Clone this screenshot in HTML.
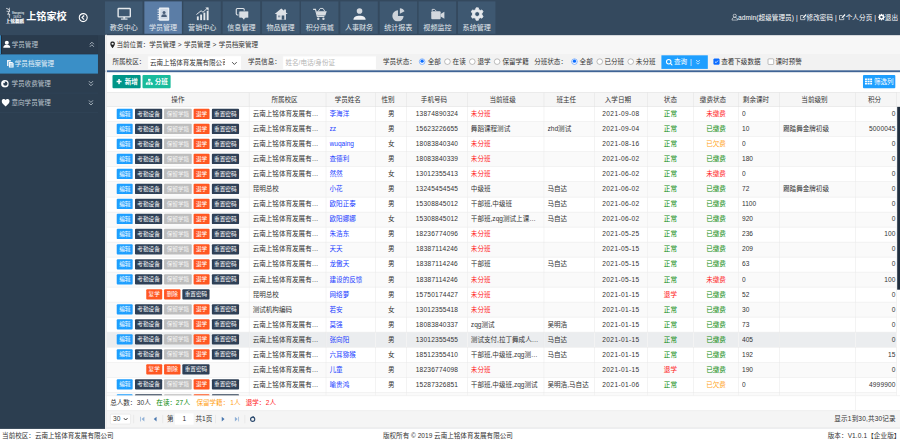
<!DOCTYPE html>
<html lang="zh-CN">
<head>
<meta charset="utf-8">
<title>上铭家校</title>
<style>
html,body{margin:0;padding:0;background:#fff;}
body{width:900px;height:442px;overflow:hidden;position:relative;}
#root{position:absolute;left:0;top:0;width:1920px;height:943px;transform:scale(0.46875);transform-origin:0 0;font-family:"Liberation Sans","Noto Sans CJK SC",sans-serif;font-size:14px;color:#333;overflow:hidden;background:#2c3e50;}
#root *{box-sizing:border-box;}
/* header */
#hd{position:absolute;left:0;top:0;width:1920px;height:75px;background:#34495e;z-index:3;}
#logo{position:absolute;left:11px;top:16px;width:42px;height:34px;}
#brand{position:absolute;left:56px;top:19px;font-size:21.500px;font-weight:bold;color:#fff;line-height:34px;letter-spacing:0px;white-space:nowrap;}
#coll{position:absolute;left:167px;top:27px;width:21px;height:21px;}
#tabs{position:absolute;left:224px;top:3px;height:69px;white-space:nowrap;}
.tab{position:absolute;top:0;width:80px;height:69px;background:#3e5871;text-align:center;color:#fff;}
.tab.on{background:#5b7da6;}
.tab .ic{position:absolute;left:25px;top:11px;width:30px;height:30px;}
.tab .tl{position:absolute;left:-10px;right:-10px;top:46px;font-size:15px;line-height:20px;color:#e3e8ed;}
#user{position:absolute;right:4px;top:26px;color:#fff;font-size:14px;letter-spacing:0.150px;line-height:22px;white-space:nowrap;}
#user svg{vertical-align:-2px;}
/* sidebar */
#sb{position:absolute;left:0;top:74px;width:224px;height:841px;background:#2c3e50;}
.mi{position:absolute;left:0;width:209px;height:41px;color:#bcc5ce;font-size:14px;line-height:40px;border-bottom:1px solid #34485c;}
.mi .tx{position:absolute;left:41px;top:0;}
.mi .ico{position:absolute;left:9px;top:11px;width:18px;height:18px;}
.mi .ar{position:absolute;left:188px;top:13px;width:12px;height:14px;}
.mi.p1{border-bottom-color:#1f2c3a;border-left:2px solid #3a8fc7;box-shadow:inset 2px 0 0 #1d2a38;background:#2a3b4d;}
.mi.act{background:#3a8fc7;border-bottom:none;height:40px;}
/* main */
#main{position:absolute;left:224px;top:74px;width:1696px;height:841px;background:#fff;border-left:1px solid #e4e4e4;}
#lstrip{position:absolute;left:0;top:0;width:2.500px;height:841px;background:#ececec;z-index:5;}
#bc{position:absolute;left:0;top:0;width:1696px;height:40px;background:#f7f7f7;border-top:1px solid #e6e6e6;font-size:14px;line-height:41px;color:#333;}
#bc .t{position:absolute;left:23.500px;top:0;white-space:nowrap;word-spacing:1px;}
#flt{position:absolute;left:0;top:40px;width:1696px;height:40px;background:#f2f2f2;border-bottom:4px solid #3f6496;font-size:14px;color:#333;}
#flt .lb{position:absolute;top:0;line-height:37px;white-space:nowrap;}
.inp{position:absolute;top:4.500px;height:30px;background:#fff;border:1px solid #ececec;line-height:29px;padding-left:5px;white-space:nowrap;overflow:hidden;}
.rd{position:absolute;top:10.500px;width:13px;height:13px;border-radius:50%;border:1px solid #767676;background:#fff;}
.rd.on{border:1.500px solid #0a6cff;}
.rd.on:after{content:"";position:absolute;left:1.500px;top:1.500px;width:7px;height:7px;border-radius:50%;background:#0a6cff;}
.cb{position:absolute;top:11px;width:13px;height:13px;border-radius:2px;border:1px solid #767676;background:#fff;}
.cb.on{background:#0a6cff;border-color:#0a6cff;}
#qbtn{position:absolute;left:1186px;top:4px;width:98.500px;height:28.500px;background:#1e9fff;color:#fff;line-height:28px;font-size:14px;white-space:nowrap;}
/* toolbar */
.tb{position:absolute;top:86px;height:28px;color:#fff;font-size:14px;line-height:28px;white-space:nowrap;border-radius:2px;}
/* table */
#tbw{position:absolute;left:2px;top:122.500px;width:1694px;height:647.500px;overflow:hidden;}
table{border-collapse:collapse;table-layout:fixed;width:1684px;font-size:14px;color:#333;}
th{height:30.500px;background:#f6f6f6;font-weight:normal;text-align:center;border:1px solid #e0e0e0;padding:0 13px 0 0;color:#333;}
th:first-child,th:nth-child(9){padding:0;}th:last-child{padding-right:6px;}
td{height:32.100px;border:1px solid #e6e6e6;padding:0 7px 2px 7px;white-space:nowrap;overflow:hidden;line-height:20px;}
td.c{text-align:center;padding:0 0 2px 0;}
td.rt{text-align:right;padding:0 1px 2px 0;letter-spacing:.3px;}
td.n{letter-spacing:.45px;}td.d{letter-spacing:.8px;}
tr.ev td{background:#fafafa;}
tr.hv td{background:#ebedef;}
.e{overflow:hidden;text-overflow:ellipsis;white-space:nowrap;}
.b{display:inline-block;height:22px;line-height:22px;padding:0 5px;font-size:12px;color:#fff;border-radius:2px;margin:0 2.300px;vertical-align:middle;position:relative;top:0;}
.bn{background:#1e9fff;}.bc{background:#2f4056;}.bd{background:#bdbdbd;color:#f4f4f4;}.br{background:#ff5722;}
.lk{color:#2340ff;}
.n2{letter-spacing:.4px;}
.g{color:#0a8a0a;}.r{color:#ff1a1a;}.o{color:#ffa31a;}
#thbg{position:absolute;left:2px;top:122.500px;width:1694px;height:31.500px;background:#f6f6f6;border-top:1px solid #e0e0e0;border-bottom:1px solid #e0e0e0;}
#sbar{position:absolute;left:1689px;top:154px;width:6px;height:390px;background:#1f2d3d;}
/* summary + pager */
#sum{position:absolute;left:0;top:770px;width:1696px;height:32px;background:#fff;border-top:1px solid #e6e6e6;font-size:14px;line-height:28px;white-space:nowrap;}
#pg{position:absolute;left:0;top:802px;width:1696px;height:36px;background:#f5f5f5;border-top:1px solid #e2e2e2;border-bottom:1px solid #e2e2e2;font-size:14px;line-height:34px;white-space:nowrap;}
#pg .a{position:absolute;top:0;}
/* footer */
#ft{position:absolute;left:0;top:915px;width:1920px;height:28px;background:#fff;font-size:14px;line-height:30px;color:#333;white-space:nowrap;}
</style>
</head>
<body>
<div id="root">
 <div id="hd">
  <svg id="logo" viewBox="0 0 42 34"><path d="M3 2c2 1 4 1 5 3M9 1c-1 3 1 4 0 7s-3 3-1 6 0 4 1 7M4 8c2 0 3 1 5 0M5 14c2-1 3 0 5 1" fill="none" stroke="#fff" stroke-width="1.700" stroke-linecap="round"/><text x="14.500" y="13" font-size="9" font-weight="bold" fill="#dfe4e9" textLength="26" lengthAdjust="spacingAndGlyphs" font-family="Liberation Sans,sans-serif">Shangming</text><text x="18" y="21.500" font-size="8" font-weight="bold" fill="#c3ccd5" textLength="16" lengthAdjust="spacingAndGlyphs" font-family="Liberation Sans,sans-serif">DANCE</text><text x="1.500" y="32" font-size="9.600" font-weight="bold" fill="#fff" stroke="#fff" stroke-width=".35" textLength="38.500" font-family="Liberation Sans,Noto Sans CJK SC,sans-serif">上铭舞蹈</text></svg>
  <div id="brand">上铭家校</div>
  <svg id="coll" viewBox="0 0 21 21"><circle cx="10.500" cy="10.500" r="8.500" fill="none" stroke="#fff" stroke-width="2.400"/><path d="M12.500 6L8 10.500l4.500 4.500" fill="none" stroke="#fff" stroke-width="2.600"/></svg>
  <div id="tabs"><div class="tab" style="left:0.0px"><div class="ic"><svg viewBox="0 0 32 32" width="32" height="32"><rect x="3" y="4" width="26" height="18" rx="1.5" fill="none" stroke="#e4e8ec" stroke-width="3"/><rect x="14" y="22" width="4" height="4" fill="#e4e8ec"/><rect x="9" y="25.5" width="14" height="2.5" fill="#e4e8ec"/></svg></div><div class="tl">教务中心</div></div><div class="tab on" style="left:83.7px"><div class="ic"><svg viewBox="0 0 32 32" width="32" height="32"><rect x="6" y="2" width="22" height="28" rx="2" fill="#e8edf3"/><rect x="9" y="5" width="16" height="22" fill="#cfd9e6"/><circle cx="17" cy="12.5" r="3.2" fill="#4a5f7a"/><path d="M11 22c0-4 2.5-5.5 6-5.5s6 1.500 6 5.500z" fill="#4a5f7a"/><g fill="#e8edf3"><rect x="3" y="6" width="5" height="2"/><rect x="3" y="11" width="5" height="2"/><rect x="3" y="16" width="5" height="2"/><rect x="3" y="21" width="5" height="2"/><rect x="3" y="26" width="5" height="2"/></g></svg></div><div class="tl">学员管理</div></div><div class="tab" style="left:167.3px"><div class="ic"><svg viewBox="0 0 32 32" width="32" height="32"><g fill="#e4e8ec"><rect x="4" y="21" width="4" height="8"/><rect x="11" y="17" width="4" height="12"/><rect x="18" y="13" width="4" height="16"/><rect x="25" y="9" width="4" height="20"/></g><path d="M3 17 L13 9 L17 12 L27 3" fill="none" stroke="#e4e8ec" stroke-width="2"/><path d="M22 2h7v7z" fill="#e4e8ec"/></svg></div><div class="tl">营销中心</div></div><div class="tab" style="left:251.0px"><div class="ic"><svg viewBox="0 0 32 32" width="32" height="32"><rect x="4" y="4" width="17" height="14" rx="2.500" fill="none" stroke="#dfe3e8" stroke-width="2.400"/><path d="M12 9.500h16a2.500 2.500 0 0 1 2.500 2.500v10a2.500 2.500 0 0 1-2.500 2.500h-4.500l-3.500 4.500-3.500-4.500h-4.500a2.500 2.500 0 0 1-2.500-2.500v-10a2.500 2.500 0 0 1 2.500-2.500z" fill="#d9dee4" stroke="#3e5871" stroke-width="1.600"/></svg></div><div class="tl">信息管理</div></div><div class="tab" style="left:334.6px"><div class="ic"><svg viewBox="0 0 32 32" width="32" height="32"><path d="M16 4L2 16h4v12h20V16h4L26 12.500V6h-4v3z" fill="#dde1e6"/><rect x="17" y="19" width="5.500" height="9" fill="#3e5871"/><rect x="9" y="19" width="5" height="4" fill="#3e5871" opacity=".55"/></svg></div><div class="tl">物品管理</div></div><div class="tab" style="left:418.2px"><div class="ic"><svg viewBox="0 0 32 32" width="32" height="32"><path d="M1 6h5l4 15h15" fill="none" stroke="#d8dde2" stroke-width="2.500"/><path d="M8 10h22l-3 9H10z" fill="#d8dde2"/><path d="M12 10l4-6h6l4 6" fill="none" stroke="#d8dde2" stroke-width="2"/><circle cx="12" cy="26" r="2.500" fill="#d8dde2"/><circle cx="23" cy="26" r="2.500" fill="#d8dde2"/></svg></div><div class="tl">积分商城</div></div><div class="tab" style="left:501.9px"><div class="ic"><svg viewBox="0 0 32 32" width="32" height="32"><circle cx="16" cy="9.500" r="6" fill="#d5dae0"/><path d="M3 28c0-6 5-8.500 13-8.500s13 2.500 13 8.500z" fill="#eef0f3"/></svg></div><div class="tl">人事财务</div></div><div class="tab" style="left:585.6px"><div class="ic"><svg viewBox="0 0 32 32" width="32" height="32"><path d="M14 8v12h12a12 12 0 1 1-12-12z" fill="#cdd3da"/><path d="M17.500 4a11.500 11.500 0 0 1 10 6.500l-10 5.500z" fill="#cdd3da" transform="translate(.5,-.5)"/></svg></div><div class="tl">统计报表</div></div><div class="tab" style="left:669.2px"><div class="ic"><svg viewBox="0 0 32 32" width="32" height="32"><rect x="2" y="10" width="20" height="17" rx="2" fill="#d3d8de"/><path d="M22 16l8-5v15l-8-5z" fill="#d3d8de"/><path d="M4 10V6h5l4 4" fill="none" stroke="#d3d8de" stroke-width="2"/></svg></div><div class="tl">视频监控</div></div><div class="tab" style="left:752.9px"><div class="ic"><svg viewBox="0 0 32 32" width="32" height="32"><path fill="#e6e9ed" fill-rule="evenodd" stroke="#e6e9ed" stroke-width="1.600" stroke-linejoin="round" d="M12.75 6.33 L13.47 2.74 L18.53 2.74 L19.25 6.33 L22.75 8.35 L26.22 7.18 L28.75 11.56 L26.00 13.98 L26.00 18.02 L28.75 20.44 L26.22 24.82 L22.75 23.65 L19.25 25.67 L18.53 29.26 L13.47 29.26 L12.75 25.67 L9.25 23.65 L5.78 24.82 L3.25 20.44 L6.00 18.02 L6.00 13.98 L3.25 11.56 L5.78 7.18 L9.25 8.35Z M16 10.800a5.200 5.200 0 1 0 0 10.400 5.200 5.200 0 0 0 0-10.400z"/></svg></div><div class="tl">系统管理</div></div></div>
  <div id="user"><svg width="15" height="15" viewBox="0 0 15 15"><circle cx="7.500" cy="4.500" r="3.300" fill="none" stroke="#fff" stroke-width="1.300"/><path d="M1.500 14c0-4 2.500-6 6-6s6 2 6 6z" fill="none" stroke="#fff" stroke-width="1.300"/></svg>admin(超级管理员) | <svg width="15" height="15" viewBox="0 0 15 15"><path d="M11 8.500V13H2V4h6" fill="none" stroke="#fff" stroke-width="1.400"/><path d="M6 10l1-3 6-6 2 2-6 6z" fill="#fff"/></svg>修改密码 | <svg width="15" height="15" viewBox="0 0 15 15"><path d="M11 8.500V13H2V4h6" fill="none" stroke="#fff" stroke-width="1.400"/><path d="M6 10l1-3 6-6 2 2-6 6z" fill="#fff"/></svg>个人分页 | <svg width="15" height="15" viewBox="0 0 32 32"><path fill="#fff" fill-rule="evenodd" d="M13.500 2h5l.8 4.200 2.400 1 3.500-2.400 3.500 3.500-2.400 3.500 1 2.400 4.200.8v5l-4.200.8-1 2.400 2.400 3.500-3.500 3.500-3.500-2.400-2.400 1-.8 4.200h-5l-.8-4.200-2.400-1-3.500 2.400-3.500-3.500 2.400-3.500-1-2.400L.500 20v-5l4.200-.8 1-2.400-2.400-3.500 3.500-3.500 3.500 2.400 2.400-1zM16 12a5.500 5.500 0 1 0 0 11 5.500 5.500 0 0 0 0-11z" transform="translate(0,-1.500)"/></svg>退出</div>
 </div>

 <div id="sb">
  <div class="mi p1" style="top:1px"><svg class="ico" viewBox="0 0 18 18" style="left:3.500px;width:17px;height:17px"><circle cx="9" cy="5.500" r="4.500" fill="#fff"/><path d="M1 17c0-5 3-7 8-7s8 2 8 7z" fill="#fff"/></svg><span class="tx" style="left:23px">学员管理</span><svg class="ar" viewBox="0 0 12 14"><path d="M1.500 6.500L6 2l4.500 4.500M1.500 12L6 7.500l4.500 4.500" fill="none" stroke="#b8c2cc" stroke-width="1.800"/></svg></div>
  <div class="mi act" style="top:42px;height:41px"><svg class="ico" viewBox="0 0 18 18" style="left:13px;top:11px"><path d="M2 1h8v3H5v10H2z" fill="#fff" opacity=".9"/><path d="M6 5h7l3 3v9H6z" fill="#fff"/><path d="M8 9h6M8 12h6M8 14.500h6" stroke="#3a8fc7" stroke-width="1"/></svg><span class="tx" style="left:31.500px;color:#e8f1f8">学员档案管理</span></div>
  <div class="mi" style="top:84px"><svg class="ico" viewBox="0 0 18 18" style="left:2px;width:17px;height:17px;top:12px"><circle cx="9" cy="9" r="8.500" fill="#fff"/><circle cx="10" cy="9" r="4.800" fill="#2c3e50"/><circle cx="7" cy="6" r="2" fill="#fff"/></svg><span class="tx" style="left:24.500px">学员收费管理</span><svg class="ar" viewBox="0 0 12 14"><path d="M1.500 2L6 6.500 10.500 2M1.500 7.500L6 12l4.500-4.500" fill="none" stroke="#b8c2cc" stroke-width="1.800"/></svg></div>
  <div class="mi" style="top:125px"><svg class="ico" viewBox="0 0 18 18" style="left:3px"><path d="M9 17C3 12 .500 9 .500 5.500A4.500 4.500 0 0 1 9 3.500 4.500 4.500 0 0 1 17.500 5.500C17.500 9 15 12 9 17z" fill="#fff"/></svg><span class="tx" style="left:24.500px">意向学员管理</span><svg class="ar" viewBox="0 0 12 14"><path d="M1.500 2L6 6.500 10.500 2M1.500 7.500L6 12l4.500-4.500" fill="none" stroke="#b8c2cc" stroke-width="1.800"/></svg></div>
 </div>

 <div id="main">
  <div id="lstrip"></div>
  <div id="bc"><svg style="position:absolute;left:9.500px;top:13px" width="10.500" height="15" viewBox="0 0 12 17"><path fill-rule="evenodd" d="M6 0a6 6 0 0 1 6 6c0 4-6 11-6 11S0 10 0 6a6 6 0 0 1 6-6zm0 3.300a2.700 2.700 0 1 0 0 5.400 2.700 2.700 0 0 0 0-5.400z" fill="#222"/></svg><span class="t">当前位置：学员管理 &gt; 学员管理 &gt; 学员档案管理</span></div>
  <div id="flt">
   <span class="lb" style="left:15px">所属校区：</span>
   <div class="inp" style="left:90px;width:200px;padding-left:4px">云南上铭体育发展有限公司<span style="position:absolute;right:0;top:0;width:34px;height:28px;background:#fff"></span><svg style="position:absolute;right:8px;top:11px" width="12" height="8" viewBox="0 0 12 8"><path d="M1 1.500l5 5 5-5" fill="none" stroke="#444" stroke-width="2"/></svg></div>
   <span class="lb" style="left:304px">学员信息：</span>
   <div class="inp" style="left:378px;width:200px;color:#b5b5b5">姓名/电话/身份证</div>
   <span class="lb" style="left:592px">学员状态：</span>
   <span class="rd on" style="left:669px"></span><span class="lb" style="left:687.500px">全部</span>
   <span class="rd" style="left:723px"></span><span class="lb" style="left:740.500px">在读</span>
   <span class="rd" style="left:776px"></span><span class="lb" style="left:793.500px">退学</span>
   <span class="rd" style="left:829px"></span><span class="lb" style="left:847px">保留学籍</span>
   <span class="lb" style="left:914.500px">分班状态：</span>
   <span class="rd on" style="left:994px"></span><span class="lb" style="left:1011.500px">全部</span>
   <span class="rd" style="left:1047.5px"></span><span class="lb" style="left:1064.500px">已分班</span>
   <span class="rd" style="left:1114px"></span><span class="lb" style="left:1131.500px">未分班</span>
   <div id="qbtn"><svg style="position:absolute;left:9px;top:6.500px" width="15.500" height="15.500" viewBox="0 0 14 14"><circle cx="6" cy="6" r="4.300" fill="none" stroke="#fff" stroke-width="2"/><path d="M9.300 9.300L13 13" stroke="#fff" stroke-width="2.200"/></svg><span style="position:absolute;left:27px">查询</span><span style="position:absolute;left:61px;top:-1px">|</span><svg style="position:absolute;left:73px;top:9px" width="10" height="11" viewBox="0 0 10 11"><path d="M1 1l4 4 4-4M1 6l4 4 4-4" fill="none" stroke="#fff" stroke-width="1.500"/></svg></div>
   <span class="cb on" style="left:1297px"><svg width="11" height="11" viewBox="0 0 12 12" style="position:absolute;left:0;top:0"><path d="M2.500 6l2.500 2.500 4.500-5" fill="none" stroke="#fff" stroke-width="1.800"/></svg></span><span class="lb" style="left:1313.500px">查看下级数据</span>
   <span class="cb" style="left:1412.500px"></span><span class="lb" style="left:1429.500px">课时预警</span>
  </div>
  <div class="tb" style="left:15px;width:60px;background:#009688"><svg style="position:absolute;left:8px;top:8px" width="12" height="12" viewBox="0 0 12 12"><path d="M6 .500v11M.500 6h11" stroke="#fff" stroke-width="3.200"/></svg><span style="position:absolute;left:26px;font-weight:bold">新增</span></div>
  <div class="tb" style="left:79px;width:60px;background:#1abc9c"><svg style="position:absolute;left:6px;top:7px" width="17" height="15" viewBox="0 0 15 14"><rect x="5" y="1" width="5" height="4" fill="#fff"/><path d="M7.500 5v3M2.500 10V8h10v2" fill="none" stroke="#fff" stroke-width="1.400"/><rect x="0.500" y="9.500" width="4" height="3.500" fill="#fff"/><rect x="5.500" y="9.500" width="4" height="3.500" fill="#fff"/><rect x="10.500" y="9.500" width="4" height="3.500" fill="#fff"/></svg><span style="position:absolute;left:26px;font-weight:bold">分班</span></div>
  <div class="tb" style="left:1615.500px;width:69px;background:#1e9fff"><svg style="position:absolute;left:4px;top:7px" width="16" height="14" viewBox="0 0 16 14"><g fill="#fff"><rect x="0" y="0" width="4.500" height="3.600"/><rect x="5.700" y="0" width="4.500" height="3.600"/><rect x="11.400" y="0" width="4.500" height="3.600"/><rect x="0" y="5" width="4.500" height="3.600"/><rect x="5.700" y="5" width="4.500" height="3.600"/><rect x="11.400" y="5" width="4.500" height="3.600"/><rect x="0" y="10" width="4.500" height="3.600"/><rect x="5.700" y="10" width="4.500" height="3.600"/><rect x="11.400" y="10" width="4.500" height="3.600"/></g></svg><span style="position:absolute;left:24px">筛选列</span></div>

  <div id="thbg"></div>
  <div id="tbw">
   <table><colgroup><col style="width:304px"><col style="width:164px"><col style="width:106px"><col style="width:66px"><col style="width:129.5px"><col style="width:163.5px"><col style="width:108px"><col style="width:112.5px"><col style="width:98.5px"><col style="width:96px"><col style="width:87.5px"><col style="width:162px"><col style="width:87px"></colgroup>
   <thead><tr><th>操作</th><th>所属校区</th><th>学员姓名</th><th>性别</th><th>手机号码</th><th>当前班级</th><th>班主任</th><th>入学日期</th><th>状态</th><th>缴费状态</th><th>剩余课时</th><th>当前级别</th><th>积分</th></tr></thead>
   <tbody>
<tr class=""><td class="c"><a class="b bn">编辑</a><a class="b bc">考勤设备</a><a class="b bd">保留学籍</a><a class="b br">退学</a><a class="b bc">重置密码</a></td><td><div class="e">云南上铭体育发展有限公司</div></td><td><div class="e"><a class="lk">李海洋</a></div></td><td class="c">男</td><td class="c n">13874890324</td><td><div class="e"><span class="r">未分班</span></div></td><td><div class="e"></div></td><td class="c d">2021-09-08</td><td class="c"><span class="g">正常</span></td><td class="c"><span class="r">未缴费</span></td><td><div class="e">0</div></td><td><div class="e"></div></td><td class="rt">0</td></tr>
<tr class="ev"><td class="c"><a class="b bn">编辑</a><a class="b bc">考勤设备</a><a class="b bd">保留学籍</a><a class="b br">退学</a><a class="b bc">重置密码</a></td><td><div class="e">云南上铭体育发展有限公司</div></td><td><div class="e"><a class="lk">zz</a></div></td><td class="c">男</td><td class="c n">15623226655</td><td><div class="e">舞蹈课程测试</div></td><td><div class="e">zhd测试</div></td><td class="c d">2021-09-04</td><td class="c"><span class="g">正常</span></td><td class="c"><span class="g">已缴费</span></td><td><div class="e">10</div></td><td><div class="e">踢踏舞金牌初级</div></td><td class="rt">5000045</td></tr>
<tr class=""><td class="c"><a class="b bn">编辑</a><a class="b bc">考勤设备</a><a class="b bd">保留学籍</a><a class="b br">退学</a><a class="b bc">重置密码</a></td><td><div class="e">云南上铭体育发展有限公司</div></td><td><div class="e"><a class="lk">wuqaing</a></div></td><td class="c">女</td><td class="c n">18083840340</td><td><div class="e"><span class="r">未分班</span></div></td><td><div class="e"></div></td><td class="c d">2021-08-16</td><td class="c"><span class="g">正常</span></td><td class="c"><span class="o">已欠费</span></td><td><div class="e">0</div></td><td><div class="e"></div></td><td class="rt">0</td></tr>
<tr class="ev"><td class="c"><a class="b bn">编辑</a><a class="b bc">考勤设备</a><a class="b bd">保留学籍</a><a class="b br">退学</a><a class="b bc">重置密码</a></td><td><div class="e">云南上铭体育发展有限公司</div></td><td><div class="e"><a class="lk">查德利</a></div></td><td class="c">男</td><td class="c n">18083840339</td><td><div class="e"><span class="r">未分班</span></div></td><td><div class="e"></div></td><td class="c d">2021-06-02</td><td class="c"><span class="g">正常</span></td><td class="c"><span class="g">已缴费</span></td><td><div class="e">180</div></td><td><div class="e"></div></td><td class="rt">0</td></tr>
<tr class=""><td class="c"><a class="b bn">编辑</a><a class="b bc">考勤设备</a><a class="b bd">保留学籍</a><a class="b br">退学</a><a class="b bc">重置密码</a></td><td><div class="e">云南上铭体育发展有限公司</div></td><td><div class="e"><a class="lk">然然</a></div></td><td class="c">女</td><td class="c n">13012355413</td><td><div class="e"><span class="r">未分班</span></div></td><td><div class="e"></div></td><td class="c d">2021-06-02</td><td class="c"><span class="g">正常</span></td><td class="c"><span class="r">未缴费</span></td><td><div class="e">0</div></td><td><div class="e"></div></td><td class="rt">0</td></tr>
<tr class="ev"><td class="c"><a class="b bn">编辑</a><a class="b bc">考勤设备</a><a class="b bd">保留学籍</a><a class="b br">退学</a><a class="b bc">重置密码</a></td><td><div class="e">昆明总校</div></td><td><div class="e"><a class="lk">小花</a></div></td><td class="c">男</td><td class="c n">13245454545</td><td><div class="e">中级班</div></td><td><div class="e">马自达</div></td><td class="c d">2021-06-02</td><td class="c"><span class="g">正常</span></td><td class="c"><span class="g">已缴费</span></td><td><div class="e">72</div></td><td><div class="e">踢踏舞金牌初级</div></td><td class="rt">0</td></tr>
<tr class=""><td class="c"><a class="b bn">编辑</a><a class="b bc">考勤设备</a><a class="b bd">保留学籍</a><a class="b br">退学</a><a class="b bc">重置密码</a></td><td><div class="e">云南上铭体育发展有限公司</div></td><td><div class="e"><a class="lk">欧阳正泰</a></div></td><td class="c">男</td><td class="c n">15308845012</td><td><div class="e">干部班,中级班</div></td><td><div class="e">马自达</div></td><td class="c d">2021-06-02</td><td class="c"><span class="g">正常</span></td><td class="c"><span class="g">已缴费</span></td><td><div class="e">1100</div></td><td><div class="e"></div></td><td class="rt">0</td></tr>
<tr class="ev"><td class="c"><a class="b bn">编辑</a><a class="b bc">考勤设备</a><a class="b bd">保留学籍</a><a class="b br">退学</a><a class="b bc">重置密码</a></td><td><div class="e">云南上铭体育发展有限公司</div></td><td><div class="e"><a class="lk">欧阳娜娜</a></div></td><td class="c">女</td><td class="c n">15308845012</td><td><div class="e">干部班,zqg测试上课班级</div></td><td><div class="e">马自达</div></td><td class="c d">2021-06-02</td><td class="c"><span class="g">正常</span></td><td class="c"><span class="g">已缴费</span></td><td><div class="e">920</div></td><td><div class="e"></div></td><td class="rt">0</td></tr>
<tr class=""><td class="c"><a class="b bn">编辑</a><a class="b bc">考勤设备</a><a class="b bd">保留学籍</a><a class="b br">退学</a><a class="b bc">重置密码</a></td><td><div class="e">云南上铭体育发展有限公司</div></td><td><div class="e"><a class="lk">朱浩东</a></div></td><td class="c">男</td><td class="c n">18236774096</td><td><div class="e"><span class="r">未分班</span></div></td><td><div class="e"></div></td><td class="c d">2021-05-25</td><td class="c"><span class="g">正常</span></td><td class="c"><span class="g">已缴费</span></td><td><div class="e">236</div></td><td><div class="e"></div></td><td class="rt">100</td></tr>
<tr class="ev"><td class="c"><a class="b bn">编辑</a><a class="b bc">考勤设备</a><a class="b bd">保留学籍</a><a class="b br">退学</a><a class="b bc">重置密码</a></td><td><div class="e">云南上铭体育发展有限公司</div></td><td><div class="e"><a class="lk">天天</a></div></td><td class="c">男</td><td class="c n">18387114246</td><td><div class="e"><span class="r">未分班</span></div></td><td><div class="e"></div></td><td class="c d">2021-05-15</td><td class="c"><span class="g">正常</span></td><td class="c"><span class="g">已缴费</span></td><td><div class="e">209</div></td><td><div class="e"></div></td><td class="rt">0</td></tr>
<tr class=""><td class="c"><a class="b bn">编辑</a><a class="b bc">考勤设备</a><a class="b bd">保留学籍</a><a class="b br">退学</a><a class="b bc">重置密码</a></td><td><div class="e">云南上铭体育发展有限公司</div></td><td><div class="e"><a class="lk">龙傲天</a></div></td><td class="c">男</td><td class="c n">18387114246</td><td><div class="e">干部班</div></td><td><div class="e">马自达</div></td><td class="c d">2021-05-15</td><td class="c"><span class="g">正常</span></td><td class="c"><span class="g">已缴费</span></td><td><div class="e">63</div></td><td><div class="e"></div></td><td class="rt">0</td></tr>
<tr class="ev"><td class="c"><a class="b bn">编辑</a><a class="b bc">考勤设备</a><a class="b bd">保留学籍</a><a class="b br">退学</a><a class="b bc">重置密码</a></td><td><div class="e">云南上铭体育发展有限公司</div></td><td><div class="e"><a class="lk">建设的反馈</a></div></td><td class="c">男</td><td class="c n">18387114246</td><td><div class="e"><span class="r">未分班</span></div></td><td><div class="e"></div></td><td class="c d">2021-05-15</td><td class="c"><span class="g">正常</span></td><td class="c"><span class="r">未缴费</span></td><td><div class="e">0</div></td><td><div class="e"></div></td><td class="rt">100</td></tr>
<tr class=""><td class="c"><a class="b br">复学</a><a class="b br">删除</a><a class="b bc">重置密码</a></td><td><div class="e">昆明总校</div></td><td><div class="e"><a class="lk">网络萝</a></div></td><td class="c">男</td><td class="c n">15750174427</td><td><div class="e"><span class="r">未分班</span></div></td><td><div class="e"></div></td><td class="c d">2021-01-15</td><td class="c"><span class="r">退学</span></td><td class="c"><span class="g">已缴费</span></td><td><div class="e">52</div></td><td><div class="e"></div></td><td class="rt">0</td></tr>
<tr class="ev"><td class="c"><a class="b bn">编辑</a><a class="b bc">考勤设备</a><a class="b bd">保留学籍</a><a class="b br">退学</a><a class="b bc">重置密码</a></td><td><div class="e">测试机构编码</div></td><td><div class="e"><a class="lk">若安</a></div></td><td class="c">女</td><td class="c n">13012355418</td><td><div class="e"><span class="r">未分班</span></div></td><td><div class="e"></div></td><td class="c d">2021-01-15</td><td class="c"><span class="g">正常</span></td><td class="c"><span class="g">已缴费</span></td><td><div class="e">30</div></td><td><div class="e"></div></td><td class="rt">0</td></tr>
<tr class=""><td class="c"><a class="b bn">编辑</a><a class="b bc">考勤设备</a><a class="b bd">保留学籍</a><a class="b br">退学</a><a class="b bc">重置密码</a></td><td><div class="e">云南上铭体育发展有限公司</div></td><td><div class="e"><a class="lk">莫强</a></div></td><td class="c">男</td><td class="c n">18083840337</td><td><div class="e">zqg测试</div></td><td><div class="e">吴明浩</div></td><td class="c d">2021-01-15</td><td class="c"><span class="g">正常</span></td><td class="c"><span class="g">已缴费</span></td><td><div class="e">73</div></td><td><div class="e"></div></td><td class="rt">0</td></tr>
<tr class="ev hv"><td class="c"><a class="b bn">编辑</a><a class="b bc">考勤设备</a><a class="b bd">保留学籍</a><a class="b br">退学</a><a class="b bc">重置密码</a></td><td><div class="e">云南上铭体育发展有限公司</div></td><td><div class="e"><a class="lk">张向阳</a></div></td><td class="c">男</td><td class="c n">13012355455</td><td><div class="e">测试支付,拉丁舞成人班级</div></td><td><div class="e">马自达</div></td><td class="c d">2021-01-15</td><td class="c"><span class="g">正常</span></td><td class="c"><span class="g">已缴费</span></td><td><div class="e">405</div></td><td><div class="e"></div></td><td class="rt">0</td></tr>
<tr class=""><td class="c"><a class="b bn">编辑</a><a class="b bc">考勤设备</a><a class="b bd">保留学籍</a><a class="b br">退学</a><a class="b bc">重置密码</a></td><td><div class="e">云南上铭体育发展有限公司</div></td><td><div class="e"><a class="lk">六耳猕猴</a></div></td><td class="c">女</td><td class="c n">18512355410</td><td><div class="e">干部班,中级班,zqg测试班</div></td><td><div class="e">马自达</div></td><td class="c d">2021-01-15</td><td class="c"><span class="g">正常</span></td><td class="c"><span class="g">已缴费</span></td><td><div class="e">192</div></td><td><div class="e"></div></td><td class="rt">15</td></tr>
<tr class="ev"><td class="c"><a class="b br">复学</a><a class="b br">删除</a><a class="b bc">重置密码</a></td><td><div class="e">云南上铭体育发展有限公司</div></td><td><div class="e"><a class="lk">儿童</a></div></td><td class="c">男</td><td class="c n">18236774098</td><td><div class="e"><span class="r">未分班</span></div></td><td><div class="e"></div></td><td class="c d">2021-01-15</td><td class="c"><span class="r">退学</span></td><td class="c"><span class="g">已缴费</span></td><td><div class="e">190</div></td><td><div class="e"></div></td><td class="rt">0</td></tr>
<tr class=""><td class="c"><a class="b bn">编辑</a><a class="b bc">考勤设备</a><a class="b bd">保留学籍</a><a class="b br">退学</a><a class="b bc">重置密码</a></td><td><div class="e">云南上铭体育发展有限公司</div></td><td><div class="e"><a class="lk">喻贵鸿</a></div></td><td class="c">男</td><td class="c n">15287326851</td><td><div class="e">干部班,中级班,zqg测试</div></td><td><div class="e">吴明浩,马自达</div></td><td class="c d">2021-01-06</td><td class="c"><span class="g">正常</span></td><td class="c"><span class="o">已欠费</span></td><td><div class="e">0</div></td><td><div class="e"></div></td><td class="rt">4999900</td></tr>
<tr class="ev"><td class="c"><a class="b bn">编辑</a><a class="b bc">考勤设备</a><a class="b bd">保留学籍</a><a class="b br">退学</a><a class="b bc">重置密码</a></td><td><div class="e">云南上铭体育发展有限公司</div></td><td><div class="e"><a class="lk">陈小明</a></div></td><td class="c">男</td><td class="c n">15287326852</td><td><div class="e"><span class="r">未分班</span></div></td><td><div class="e"></div></td><td class="c d">2021-01-06</td><td class="c"><span class="g">正常</span></td><td class="c"><span class="g">已缴费</span></td><td><div class="e">0</div></td><td><div class="e"></div></td><td class="rt">0</td></tr>
   </tbody></table>
  </div>
  <div id="sbar"></div>

  <div id="sum"><span style="position:absolute;left:1599px;top:0;width:1px;height:32px;background:#e6e6e6"></span><span style="position:absolute;left:10px">总人数：</span><span style="position:absolute;left:66.500px" class="n2">30人</span><span class="g" style="position:absolute;left:108.500px">在读：</span><span class="g n2" style="position:absolute;left:150px">27人</span><span class="o" style="position:absolute;left:194px">保留学籍：</span><span class="o n2" style="position:absolute;left:266px">1人</span><span class="r" style="position:absolute;left:299px">退学：</span><span class="r n2" style="position:absolute;left:342px">2人</span></div>
  <div id="pg">
   <div class="a" style="left:10px;top:6px;width:44px;height:22px;line-height:20px;background:#fff;border:1px solid #ddd;border-radius:3px;padding-left:5px;letter-spacing:.5px">30<svg style="position:absolute;right:5px;top:7px" width="10" height="7" viewBox="0 0 10 7"><path d="M1 1l4 4 4-4" fill="none" stroke="#222" stroke-width="2"/></svg></div>
   <div class="a" style="left:60px;top:8px;width:1px;height:18px;background:#ddd"></div>
   <svg class="a" style="left:73px;top:11px" width="12" height="12" viewBox="0 0 12 12"><rect x="1" y="1" width="1.600" height="10" fill="#8fb0d6"/><path d="M10 1L4 6l6 5z" fill="#8fb0d6"/></svg>
   <svg class="a" style="left:101px;top:11px" width="10" height="12" viewBox="0 0 10 12"><path d="M8 1L2 6l6 5z" fill="#4a78b0"/></svg>
   <div class="a" style="left:122px;top:8px;width:1px;height:18px;background:#ddd"></div>
   <span class="a" style="left:131px">第</span>
   <div class="a" style="left:148px;top:5px;width:40px;height:24px;line-height:24px;background:#fff;text-align:center">1</div>
   <span class="a" style="left:192px">共1页</span>
   <div class="a" style="left:234px;top:8px;width:1px;height:18px;background:#ddd"></div>
   <svg class="a" style="left:246px;top:11px" width="10" height="12" viewBox="0 0 10 12"><path d="M2 1l6 5-6 5z" fill="#4a78b0"/></svg>
   <svg class="a" style="left:274px;top:11px" width="12" height="12" viewBox="0 0 12 12"><rect x="9.400" y="1" width="1.600" height="10" fill="#8fb0d6"/><path d="M2 1l6 5-6 5z" fill="#8fb0d6"/></svg>
   <div class="a" style="left:296.500px;top:8px;width:1px;height:18px;background:#ddd"></div>
   <svg class="a" style="left:306.500px;top:10px" width="14" height="14" viewBox="0 0 14 14"><circle cx="7" cy="7.500" r="4.500" fill="none" stroke="#2c4a6e" stroke-width="2.600"/><path d="M7 0v5l3.500-2.500z" fill="#2c4a6e"/></svg>
   <span class="a" style="right:10px;letter-spacing:.35px">显示1到30,共30记录</span>
  </div>
 </div>

 <div id="ft"><span style="position:absolute;left:4.500px">当前校区：云南上铭体育发展有限公司</span><span style="position:absolute;left:817px">版权所有 © 2019 云南上铭体育发展有限公司</span><span style="position:absolute;right:-1px;letter-spacing:.2px">版本：V1.0.1【企业版】</span></div>
</div>
</body>
</html>
